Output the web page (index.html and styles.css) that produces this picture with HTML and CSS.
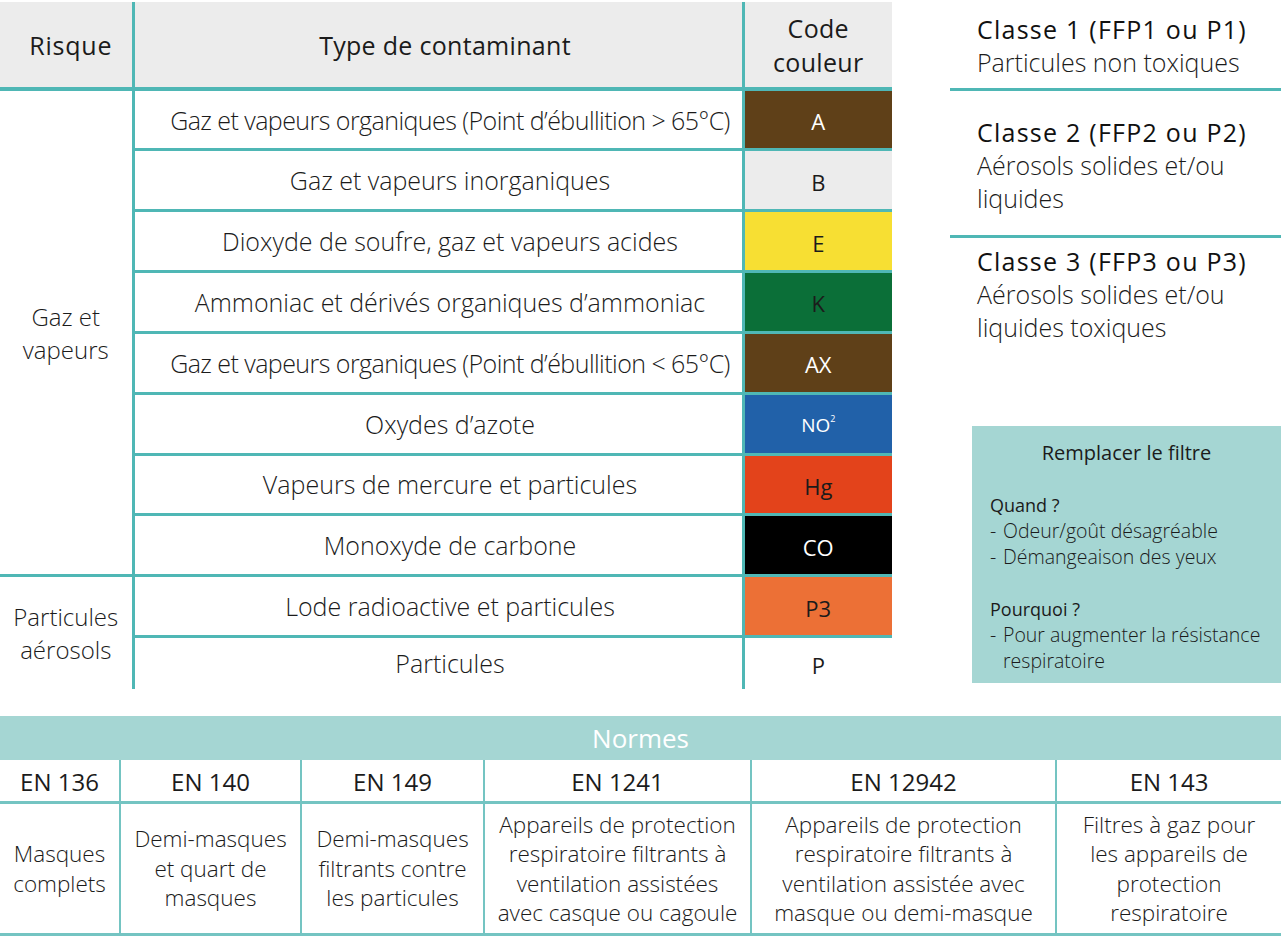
FILE: index.html
```html
<!DOCTYPE html>
<html lang="fr">
<head>
<meta charset="utf-8">
<title>Filtres respiratoires</title>
<link rel="stylesheet" href="styles.css">
</head>
<body>
<div class="page">
  <div class="top">
    <table class="filters">
      <colgroup><col class="w-risk"><col class="w-type"><col class="w-code"></colgroup>
      <thead>
        <tr><th class="h-risk">Risque</th><th class="h-type">Type de contaminant</th><th class="h-code">Code<br>couleur</th></tr>
      </thead>
      <tbody>
        <tr><td class="risk group-end" rowspan="8">Gaz et<br>vapeurs</td><td class="type tight">Gaz et vapeurs organiques (Point d’ébullition &gt; 65°C)</td><td class="code c-a">A</td></tr>
        <tr><td class="type">Gaz et vapeurs inorganiques</td><td class="code c-b">B</td></tr>
        <tr><td class="type">Dioxyde de soufre, gaz et vapeurs acides</td><td class="code c-e">E</td></tr>
        <tr><td class="type">Ammoniac et dérivés organiques d’ammoniac</td><td class="code c-k">K</td></tr>
        <tr><td class="type tight">Gaz et vapeurs organiques (Point d’ébullition &lt; 65°C)</td><td class="code c-ax">AX</td></tr>
        <tr><td class="type">Oxydes d’azote</td><td class="code c-no">NO<sup>2</sup></td></tr>
        <tr><td class="type">Vapeurs de mercure et particules</td><td class="code c-hg">Hg</td></tr>
        <tr><td class="type group-end">Monoxyde de carbone</td><td class="code c-co group-end">CO</td></tr>
        <tr><td class="risk last" rowspan="2">Particules<br>aérosols</td><td class="type">Lode radioactive et particules</td><td class="code c-p3">P3</td></tr>
        <tr class="last-row"><td class="type last">Particules</td><td class="code c-p last">P</td></tr>
      </tbody>
    </table>
    <aside class="side">
      <div class="classe classe-1">
        <p class="classe-title">Classe 1 (FFP1 ou P1)</p>
        <p class="classe-text">Particules non toxiques</p>
      </div>
      <div class="classe classe-2">
        <p class="classe-title">Classe 2 (FFP2 ou P2)</p>
        <p class="classe-text">Aérosols solides et/ou<br>liquides</p>
      </div>
      <div class="classe classe-3">
        <p class="classe-title">Classe 3 (FFP3 ou P3)</p>
        <p class="classe-text">Aérosols solides et/ou<br>liquides toxiques</p>
      </div>
      <div class="replace">
        <p class="replace-title">Remplacer le filtre</p>
        <p class="replace-head">Quand ?</p>
        <ul class="replace-list">
          <li>Odeur/goût désagréable</li>
          <li>Démangeaison des yeux</li>
        </ul>
        <p class="replace-head">Pourquoi ?</p>
        <ul class="replace-list">
          <li>Pour augmenter la résistance respiratoire</li>
        </ul>
      </div>
    </aside>
  </div>

  <table class="normes">
    <colgroup><col class="n1"><col class="n2"><col class="n3"><col class="n4"><col class="n5"><col class="n6"></colgroup>
    <thead>
      <tr><th colspan="6" class="normes-title">Normes</th></tr>
    </thead>
    <tbody>
      <tr class="en-row">
        <td>EN 136</td><td>EN 140</td><td>EN 149</td><td>EN 1241</td><td>EN 12942</td><td>EN 143</td>
      </tr>
      <tr class="desc-row">
        <td>Masques<br>complets</td>
        <td>Demi-masques<br>et quart de<br>masques</td>
        <td>Demi-masques<br>filtrants contre<br>les particules</td>
        <td>Appareils de protection<br>respiratoire filtrants à<br>ventilation assistées<br>avec casque ou cagoule</td>
        <td>Appareils de protection<br>respiratoire filtrants à<br>ventilation assistée avec<br>masque ou demi-masque</td>
        <td>Filtres à gaz pour<br>les appareils de<br>protection<br>respiratoire</td>
      </tr>
    </tbody>
  </table>
</div>
</body>
</html>
```

FILE: styles.css
```css
* { box-sizing: border-box; }

body {
  margin: 0;
  background: #ffffff;
  font-family: "Open Sans", "Noto Sans", sans-serif;
  color: #1b1b1b;
}

p { margin: 0; }

.page { width: 1281px; }

.top {
  display: flex;
  align-items: flex-start;
  padding-top: 2px;
}

/* ---------- filters table ---------- */
.filters {
  border-collapse: collapse;
  table-layout: fixed;
  width: 892px;
  flex: none;
}

.w-risk { width: 133px; }
.w-type { width: 610px; }
.w-code { width: 149px; }

.filters th {
  background: #ececec;
  height: 87px;
  padding: 0;
  font-size: 25px;
  font-weight: 500;
  line-height: 34px;
  letter-spacing: 0.3px;
  color: #1b1b1b;
  border-bottom: 4px solid #4fb7b5;
}

.filters .h-risk { border-right: 3px solid #4fb7b5; padding-left: 10px; letter-spacing: 0.8px; }
.filters .h-type { padding-left: 14px; }
.filters .h-code { border-left: 3px solid #4fb7b5; }

.filters td {
  height: 60.85px;
  padding: 0;
  text-align: center;
  vertical-align: middle;
  border-bottom: 3px solid #4fb7b5;
}

.filters .risk {
  font-size: 24px;
  font-weight: 300;
  line-height: 33px;
  border-right: 3px solid #4fb7b5;
}

.filters .type {
  padding-left: 24px;
  font-size: 25px;
  font-weight: 300;
  color: #1b1b1b;
  border-right: 3px solid #4fb7b5;
}

.filters .tight { letter-spacing: -0.55px; }

.filters .code {
  padding-top: 3px;
  font-size: 22px;
  font-weight: 500;
  color: #1b1b1b;
}

.filters .last { border-bottom: none; }
.filters .last-row td { height: 52px; }

.filters .code sup {
  font-size: 9px;
  vertical-align: 10px;
}

.c-a  { background: #5f4018; color: #ffffff !important; }
.c-b  { background: #ececec; }
.c-e  { background: #f7df33; }
.c-k  { background: #0b6f38; }
.c-ax { background: #5f4018; color: #ffffff !important; }
.c-no { background: #2161a9; color: #ffffff !important; font-size: 19px !important; }
.c-hg { background: #e3431b; }
.c-co { background: #000000; color: #ffffff !important; }
.c-p3 { background: #ec7036; }
.c-p  { background: #ffffff; }

/* ---------- side panel ---------- */
.side {
  flex: 1;
  margin-left: 58px;
}

.classe {
  padding-left: 27px;
  border-bottom: 3px solid #4fb7b5;
}

.classe-1 { padding-top: 11px; padding-bottom: 9px; }
.classe-2 { padding-top: 25px; padding-bottom: 20px; }
.classe-3 { padding-top: 7px; border-bottom: none; }

.classe-title {
  font-size: 25px;
  font-weight: 500;
  line-height: 33px;
  letter-spacing: 1.25px;
  color: #111111;
}

.classe-text {
  font-size: 25px;
  font-weight: 300;
  line-height: 33px;
  color: #1b1b1b;
}

.replace {
  margin-top: 82px;
  margin-left: 22px;
  height: 257px;
  background: #a5d6d3;
  padding: 14px 18px 0 18px;
  font-size: 19.5px;
  line-height: 26px;
  color: #1b1b1b;
}

.replace-title {
  text-align: center;
  font-size: 20px;
  font-weight: 400;
  margin-bottom: 26px;
}

.replace-head { font-size: 18px; font-weight: 500; }

.replace-list {
  list-style: none;
  margin: 0 0 26px 0;
  padding: 0 0 0 13px;
  font-weight: 300;
}

.replace-list li { position: relative; }
.replace-list li::before {
  content: "-";
  position: absolute;
  left: -13px;
}

/* ---------- normes table ---------- */
.normes {
  margin-top: 27px;
  width: 1281px;
  border-collapse: collapse;
  table-layout: fixed;
}

.n1 { width: 120px; }
.n2 { width: 181px; }
.n3 { width: 183px; }
.n4 { width: 267px; }
.n5 { width: 305px; }
.n6 { width: 225px; }

.normes-title {
  background: #a5d6d3;
  color: #ffffff;
  font-size: 26px;
  font-weight: 400;
  height: 44px;
  padding: 0;
}

.normes td {
  text-align: center;
  vertical-align: middle;
  padding: 0;
  border-right: 2px solid #74c4c2;
  border-bottom: 3px solid #74c4c2;
}

.normes td:last-child { border-right: none; }

.en-row td {
  height: 43px;
  padding-top: 3px;
  font-size: 24px;
  font-weight: 400;
}

.desc-row td {
  height: 132px;
  font-size: 22.5px;
  font-weight: 300;
  line-height: 29.5px;
}
```
